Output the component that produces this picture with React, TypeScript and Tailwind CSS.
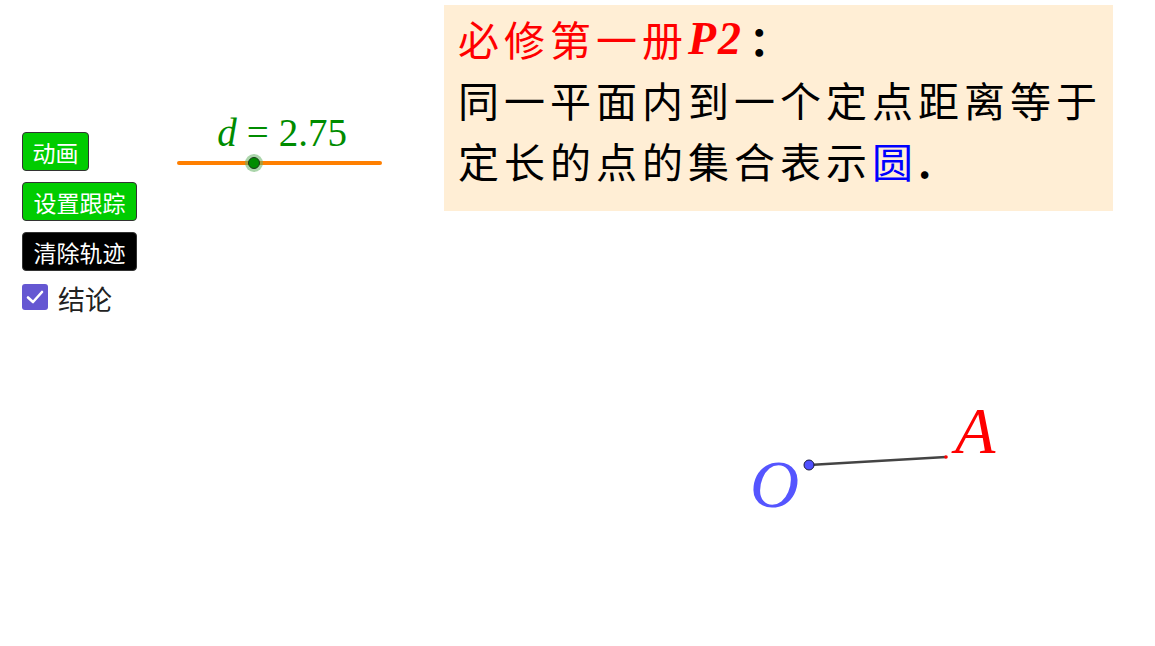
import React from 'react';

const cjk = '"Noto Sans CJK SC", "Noto Sans", sans-serif';
const serif = '"Liberation Serif", "DejaVu Serif", serif';

function GgbButton({ label, dark, width }: { label: string; dark?: boolean; width: string }) {
  return (
    <button
      type="button"
      className={`flex h-[39px] items-center justify-center rounded-[4px] border border-[#333] pt-[2px] text-[23px] leading-none text-white ${width} ${
        dark ? 'bg-black' : 'bg-[#00cc00]'
      }`}
      style={{ fontFamily: cjk }}
    >
      {label}
    </button>
  );
}

export default function App() {
  return (
    <div className="relative h-[646px] w-[1155px] overflow-hidden bg-white">
      {/* Left controls */}
      <div className="absolute left-[22px] top-[132px] flex flex-col items-start gap-[11px]">
        <GgbButton label="动画" width="w-[67px]" />
        <GgbButton label="设置跟踪" width="w-[115px]" />
        <GgbButton label="清除轨迹" dark width="w-[115px]" />
        <div className="-mt-[1px] flex items-center gap-[10px]">
          <span className="flex h-[26px] w-[26px] items-center justify-center rounded-[3px] bg-[#6557d2]">
            <svg width="20" height="20" viewBox="0 0 20 20" fill="none">
              <path d="M3 10.5 L8 15 L17 5" stroke="white" strokeWidth="2.6" strokeLinecap="round" strokeLinejoin="round" />
            </svg>
          </span>
          <span className="pt-[4px] text-[27px] leading-none text-[#222]" style={{ fontFamily: cjk }}>
            结论
          </span>
        </div>
      </div>

      {/* Slider */}
      <div className="absolute left-[170px] top-[113px] w-[224px]">
        <div className="flex items-baseline justify-center whitespace-nowrap text-[39px] leading-none text-[#008c00]" style={{ fontFamily: serif }}>
          <span className="italic">d</span>
          <span className="mx-[10px]">=</span>
          <span>2.75</span>
        </div>
      </div>
      <svg className="absolute left-0 top-0" width="1155" height="646">
        <line x1="179" y1="163" x2="380" y2="163" stroke="#ff7f00" strokeWidth="4" strokeLinecap="round" />
        <circle cx="254" cy="163" r="9" fill="#66b266" opacity="0.55" />
        <circle cx="254" cy="163" r="5.5" fill="#008c00" stroke="#1a3a1a" strokeWidth="1" />

        {/* Segment OA */}
        <line x1="809" y1="465" x2="946" y2="457" stroke="#444" strokeWidth="2.6" />
        <circle cx="946" cy="457" r="1.8" fill="#ff0000" />
        <circle cx="809" cy="465" r="5" fill="#5050ff" stroke="#1a1a40" strokeWidth="1" />
      </svg>

      {/* Point labels */}
      <span
        className="absolute left-[750px] top-[450px] text-[68px] italic leading-none text-[#5555ff]"
        style={{ fontFamily: serif }}
      >
        O
      </span>
      <span
        className="absolute left-[955px] top-[398px] text-[66px] italic leading-none text-[#ff0000]"
        style={{ fontFamily: serif }}
      >
        A
      </span>

      {/* Text box */}
      <div
        className="absolute left-[444px] top-[5px] h-[206px] w-[669px] whitespace-nowrap bg-[#ffeed5] pl-[14px] pt-[3px] text-[41px] tracking-[5px] text-black"
        style={{ fontFamily: cjk }}
      >
        <div className="flex h-[61px] items-center">
          <span className="text-[#ff0000]">必修第一册</span>
          <span className="text-[46px] font-bold italic tracking-[2px] text-[#ff0000]" style={{ fontFamily: serif }}>
            P2
          </span>
          <span className="ml-[6px] font-bold">：</span>
        </div>
        <div className="flex h-[61px] items-center">同一平面内到一个定点距离等于</div>
        <div className="flex h-[61px] items-center">
          定长的点的集合表示<span className="text-[#0000ff]">圆</span>
          <span className="font-bold">.</span>
        </div>
      </div>
    </div>
  );
}
